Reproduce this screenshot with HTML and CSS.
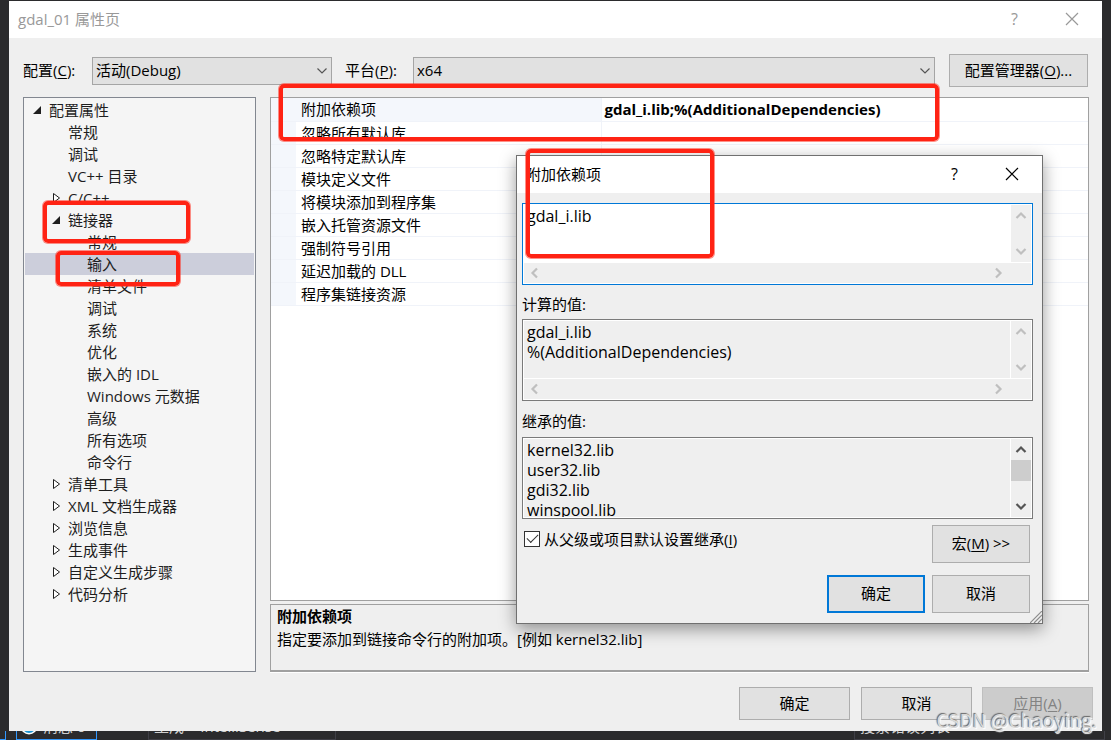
FILE: index.html
```html
<!DOCTYPE html>
<html lang="zh-CN">
<head>
<meta charset="utf-8">
<title>gdal_01 属性页</title>
<link rel="stylesheet" href="styles.css">
</head>
<body>
<svg class="defs" aria-hidden="true">
  <symbol id="close" viewBox="0 0 14 14"><path d="M1 1L13 13M13 1L1 13" fill="none" stroke="currentColor" stroke-width="1.2"/></symbol>
  <symbol id="open" viewBox="0 0 10 10"><path d="M9 1V9H1Z" fill="#1e1e1e"/></symbol>
  <symbol id="shut" viewBox="0 0 10 10"><path d="M2.500 .5V9.500L8.500 5Z" fill="#fff" stroke="#1e1e1e"/></symbol>
  <symbol id="drop" viewBox="0 0 12 8"><path d="M1.5 1.5L6 6L10.500 1.500" fill="none" stroke="#555" stroke-width="1.2"/></symbol>
  <symbol id="arrow" viewBox="0 0 12 12"><path d="M1.500 9L6 4.500L10.500 9" fill="none" stroke="currentColor" stroke-width="2.200"/></symbol>
</svg>

<main class="window">
  <header class="titlebar muted">
    <h1>gdal_01 属性页</h1>
    <button class="caption" aria-label="帮助">?</button>
    <button class="caption" aria-label="关闭"><svg class="x"><use href="#close"/></svg></button>
  </header>

  <div class="config">
    <label class="config-label" for="cfg">配置(<u>C</u>):</label>
    <span class="combo combo-fixed"><select id="cfg"><option>活动(Debug)</option></select><svg class="drop"><use href="#drop"/></svg></span>
    <label class="config-label platform" for="plat">平台(<u>P</u>):</label>
    <span class="combo"><select id="plat"><option>x64</option></select><svg class="drop"><use href="#drop"/></svg></span>
    <button class="btn manager">配置管理器(<u>O</u>)...</button>
  </div>

  <div class="panes">
    <ul class="tree">
      <li class="l0"><svg><use href="#open"/></svg>配置属性</li>
      <li class="l1 leaf">常规</li>
      <li class="l1 leaf">调试</li>
      <li class="l1 leaf">VC++ 目录</li>
      <li class="l1"><svg><use href="#shut"/></svg>C/C++</li>
      <li class="l1"><svg><use href="#open"/></svg>链接器</li>
      <li class="l2 leaf">常规</li>
      <li class="l2 leaf selected">输入</li>
      <li class="l2 leaf">清单文件</li>
      <li class="l2 leaf">调试</li>
      <li class="l2 leaf">系统</li>
      <li class="l2 leaf">优化</li>
      <li class="l2 leaf">嵌入的 IDL</li>
      <li class="l2 leaf">Windows 元数据</li>
      <li class="l2 leaf">高级</li>
      <li class="l2 leaf">所有选项</li>
      <li class="l2 leaf">命令行</li>
      <li class="l1"><svg><use href="#shut"/></svg>清单工具</li>
      <li class="l1"><svg><use href="#shut"/></svg>XML 文档生成器</li>
      <li class="l1"><svg><use href="#shut"/></svg>浏览信息</li>
      <li class="l1"><svg><use href="#shut"/></svg>生成事件</li>
      <li class="l1"><svg><use href="#shut"/></svg>自定义生成步骤</li>
      <li class="l1"><svg><use href="#shut"/></svg>代码分析</li>
    </ul>

    <section class="detail">
      <div class="props-box">
        <table class="props">
          <tr class="current"><th>附加依赖项</th><td>gdal_i.lib;%(AdditionalDependencies)</td></tr>
          <tr><th>忽略所有默认库</th><td></td></tr>
          <tr><th>忽略特定默认库</th><td></td></tr>
          <tr><th>模块定义文件</th><td></td></tr>
          <tr><th>将模块添加到程序集</th><td></td></tr>
          <tr><th>嵌入托管资源文件</th><td></td></tr>
          <tr><th>强制符号引用</th><td></td></tr>
          <tr><th>延迟加载的 DLL</th><td></td></tr>
          <tr><th>程序集链接资源</th><td></td></tr>
        </table>
      </div>
      <div class="help">
        <h2>附加依赖项</h2>
        <p>指定要添加到链接命令行的附加项。[例如 kernel32.lib]</p>
      </div>
    </section>
  </div>

  <footer class="actions">
    <button class="btn">确定</button>
    <button class="btn cancel">取消</button>
    <button class="btn" disabled>应用(<u>A</u>)</button>
  </footer>
</main>

<div class="ide-bar">
  <span class="chip edge"></span>
  <span class="chip messages"><svg viewBox="0 0 18 18"><circle cx="9" cy="9" r="8.500" fill="#fff"/><circle cx="9" cy="9" r="7" fill="#1b93d1"/><path d="M9 8V14" stroke="#fff" stroke-width="2"/></svg>消息 0</span>
  <span class="chip source">生成 + IntelliSense</span>
  <span class="chip search">搜索错误列表</span>
</div>

<section class="dialog" role="dialog" aria-labelledby="dlg-title">
  <header class="titlebar">
    <h2 id="dlg-title">附加依赖项</h2>
    <button class="caption" aria-label="帮助">?</button>
    <button class="caption" aria-label="关闭"><svg class="x"><use href="#close"/></svg></button>
  </header>
  <div class="dialog-body">
    <div class="field active">
      <textarea aria-label="附加依赖项" wrap="off">gdal_i.lib</textarea>
      <span class="vbar"><svg><use href="#arrow"/></svg><svg class="down"><use href="#arrow"/></svg></span>
      <span class="hbar"><svg class="left"><use href="#arrow"/></svg><svg class="right"><use href="#arrow"/></svg></span>
    </div>
    <label class="field-label" for="eval">计算的值:</label>
    <div class="field">
      <textarea id="eval" wrap="off" readonly>gdal_i.lib
%(AdditionalDependencies)</textarea>
      <span class="vbar"><svg><use href="#arrow"/></svg><svg class="down"><use href="#arrow"/></svg></span>
      <span class="hbar"><svg class="left"><use href="#arrow"/></svg><svg class="right"><use href="#arrow"/></svg></span>
    </div>
    <label class="field-label inherited" for="inh">继承的值:</label>
    <div class="field tall">
      <textarea id="inh" readonly>kernel32.lib
user32.lib
gdi32.lib
winspool.lib</textarea>
      <span class="vbar enabled"><svg><use href="#arrow"/></svg><i class="thumb"></i><svg class="down"><use href="#arrow"/></svg></span>
    </div>
    <div class="row">
      <label class="check"><input type="checkbox" checked>从父级或项目默认设置继承(<u>I</u>)</label>
      <button class="btn">宏(<u>M</u>) &gt;&gt;</button>
    </div>
    <div class="row end">
      <button class="btn primary">确定</button>
      <button class="btn">取消</button>
    </div>
  </div>
  <svg class="grip" viewBox="0 0 12 12"><path d="M0 12L12 0M4 12L12 4M8 12L12 8" stroke="#8c8c8c" stroke-width="1.200"/></svg>
</section>

<div class="mark mark-property"></div>
<div class="mark mark-linker"></div>
<div class="mark mark-input"></div>
<div class="mark mark-value"></div>
<div class="watermark">CSDN @Chaoying.</div>
</body>
</html>
```
FILE: styles.css
```css
* { box-sizing: border-box; }

body {
  position: relative;
  display: flex;
  flex-direction: column;
  min-height: 100vh;
  margin: 0;
  padding: 1px 9px 0;
  overflow: hidden;
  background: #2b2b2d;
  color: #000;
  font: 15px/20px "Open Sans", "Noto Sans CJK SC", sans-serif;
}

button, select, textarea, input { font: inherit; color: inherit; }
h1, h2, p, ul { margin: 0; padding: 0; }
h1, h2 { font-size: 15px; font-weight: 400; }
u { text-underline-offset: 2px; text-decoration-thickness: 1px; }
.defs { position: absolute; width: 0; height: 0; }

.window {
  flex: 1;
  display: flex;
  flex-direction: column;
  background: #efefef;
}

.titlebar {
  display: flex;
  align-items: center;
  height: 37px;
  padding: 0 2px 2px 9px;
  background: #fff;
}
.titlebar h1, .titlebar h2 { flex: 1; }
.muted { color: #999; }
.caption {
  display: flex;
  align-items: center;
  justify-content: center;
  width: 57px;
  height: 35px;
  padding: 0;
  border: 0;
  background: none;
  font-size: 16px;
}
.x { width: 14px; height: 14px; }

.config {
  display: flex;
  align-items: center;
  margin: 16px 14px 10px;
}
.config-label { width: 69px; padding-bottom: 2px; }
.platform { width: 68px; margin-left: 13px; }
.combo { position: relative; flex: 1; }
.combo-fixed { flex: 0 0 240px; }
.combo select {
  display: block;
  width: 100%;
  height: 28px;
  padding: 0 3px 2px;
  appearance: none;
  border: 1px solid #a5a5a5;
  border-radius: 0;
  background: #e1e1e1;
}
.drop {
  position: absolute;
  top: 10px;
  right: 4px;
  width: 12px;
  height: 8px;
}

.btn {
  width: 111px;
  height: 33px;
  padding: 0 0 2px;
  border: 1px solid #adadad;
  background: #e1e1e1;
}
.btn:disabled { border-color: #bfbfbf; background: #ccc; color: #838383; }
.manager { width: 139px; margin-left: 14px; }

.panes {
  flex: 1;
  display: grid;
  grid-template-columns: 233px 1fr;
  gap: 14px;
  margin: 0 13px 0 14px;
}

.tree {
  padding: 1px;
  border: 1px solid #828790;
  background: #f5f5f5;
  color: #1e1e1e;
  list-style: none;
}
.tree li { display: flex; align-items: center; height: 22px; white-space: nowrap; }
.tree svg { width: 10px; height: 10px; margin-right: 7px; }
.tree .l0 { padding-left: 7px; }
.tree .l1 { padding-left: 26px; }
.tree .l2 { padding-left: 45px; }
.tree .leaf::before { content: ""; width: 17px; }
.tree .selected { background: #cccedb; }

.detail { display: flex; flex-direction: column; gap: 3px; min-width: 0; }
.props-box { flex: 1; border: 1px solid #a0a0a0; background: #fff; }
.props { width: 100%; table-layout: fixed; border-collapse: collapse; }
.props th, .props td {
  height: 23px;
  padding: 0 0 0 5px;
  border-bottom: 1px solid #f0f3f9;
  line-height: 22px;
  text-align: left;
  white-space: nowrap;
}
.props th {
  width: 330px;
  padding-left: 30px;
  border-right: 1px solid #f0f3f9;
  background: linear-gradient(90deg, #f4f7fc 25px, #fff 25px);
  font-weight: 400;
}
.props .current th { background: #f4f7fc; }
.props td { padding-left: 3px; font-weight: 700; }

.help {
  height: 68px;
  padding: 0 6px;
  border: 1px solid #a0a0a0;
  border-bottom-width: 2px;
  box-shadow: 0 1px #fff;
}
.help h2 { font-weight: 700; line-height: 22px; }
.help p { line-height: 24px; }

.actions {
  display: flex;
  justify-content: flex-end;
  gap: 10px;
  padding: 15px 9px 11px;
}
.cancel { margin-left: 1px; }

.ide-bar {
  display: flex;
  align-items: flex-end;
  height: 9px;
  margin: 0 -9px;
  overflow: hidden;
  color: #d0d0d0;
}
.chip {
  display: flex;
  align-items: center;
  flex: none;
  height: 28px;
  padding-left: 5px;
  border: 1px solid #3f3f46;
}
.chip svg { width: 18px; height: 18px; margin-right: 5px; }
.edge { width: 6px; border-color: #3399ff; border-left: 0; }
.messages { width: 81px; margin-left: 10px; padding-left: 3px; border-color: #3399ff; }
.source { width: 188px; margin-left: 51px; }
.search { flex: 1; margin: 0 6px 0 518px; }

.dialog {
  position: absolute;
  top: 155px;
  left: 516px;
  width: 527px;
  border: 1px solid #707070;
  background: #efefef;
  box-shadow: 0 5px 16px rgba(0, 0, 0, .4);
}
.dialog-body { padding: 10px 9px 10px 5px; }
.dialog .caption { color: #000; }

.field {
  display: grid;
  grid-template: 1fr 20px / 1fr 20px;
  gap: 1px;
  height: 82px;
  padding: 1px;
  border: 1px solid #7a7a7a;
  background: #fff;
}
.active { border-color: #0078d7; }
.tall { grid-template-rows: 1fr; }
.field textarea {
  min-width: 0;
  min-height: 0;
  padding: 1px 3px;
  border: 0;
  outline: 0;
  resize: none;
  overflow: hidden;
  background: #fff;
  font-size: 16px;
  line-height: 20px;
}
.field textarea:read-only { background: #efefef; }
.vbar, .hbar {
  display: flex;
  align-items: center;
  justify-content: space-between;
  background: #efefef;
  color: #bfbfbf;
}
.vbar { flex-direction: column; padding: 4px 0; }
.hbar { grid-column: 1 / 3; padding: 0 26px 0 4px; }
.vbar svg, .hbar svg { width: 12px; height: 12px; }
.down { transform: rotate(180deg); }
.left { transform: rotate(-90deg); }
.right { transform: rotate(90deg); }
.enabled { color: #555; }
.thumb { width: 20px; height: 21px; margin-bottom: 15px; background: #cdcdcd; }

.field-label { display: block; padding: 9px 0 5px; }
.inherited { padding: 10px 0 6px; }

.row {
  display: flex;
  justify-content: space-between;
  margin: 6px 3px 0 2px;
}
.row .btn { width: 98px; height: 38px; }
.end { justify-content: flex-end; gap: 7px; margin-top: 12px; }
.row .primary { border: 2px solid #0078d7; }
.check { display: flex; align-items: center; height: 28px; }
.check input {
  width: 16px;
  height: 16px;
  margin: 0 4px 0 0;
  appearance: none;
  border: 1px solid #333;
  background: #fff;
  display: grid;
  place-items: center;
}
.check input:checked::before {
  content: "";
  width: 10px;
  height: 5px;
  border: solid #333;
  border-width: 0 0 1px 1px;
  transform: translateY(-2px) rotate(-45deg);
}
.grip { position: absolute; right: 0; bottom: 0; width: 12px; height: 12px; }

.mark {
  position: absolute;
  border: 4px solid #ff2314;
  border-radius: 5px;
  box-shadow: 0 0 0 1px rgba(255, 35, 20, .5);
  pointer-events: none;
}
.mark-property { top: 84px; left: 279px; width: 660px; height: 57px; }
.mark-linker { top: 201px; left: 43px; width: 147px; height: 42px; }
.mark-input { top: 251px; left: 56px; width: 124px; height: 35px; }
.mark-value { top: 149px; left: 526px; width: 188px; height: 109px; }

.watermark {
  position: absolute;
  right: 14px;
  bottom: 5px;
  color: #d8d8d8;
  font: 400 19px/30px "Noto Sans CJK SC", sans-serif;
  text-shadow: -1px -1px 1px #666, 1px 1px 1px #fff;
}
```
